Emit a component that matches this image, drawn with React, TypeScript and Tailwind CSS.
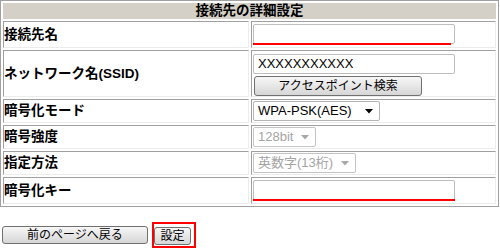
const font = "font-['Liberation_Sans','Noto_Sans_CJK_JP',sans-serif]";

const cell =
  "border border-t-[#a0a0a0] border-l-[#a0a0a0] border-b-[#ececec] border-r-[#ececec] align-middle";

function TextBox({ value, redWidth }: { value?: string; redWidth?: string }) {
  return (
    <div className="relative w-[202px] h-[21px]">
      <div className="w-[202px] h-[20px] border border-[#bdbdbd] rounded-[2px] bg-white pl-[4px] text-[13px] leading-[18px] text-black">
        {value}
      </div>
      {redWidth && (
        <span className={`absolute left-0 bottom-0 h-[2px] bg-[#ff0000] ${redWidth}`} />
      )}
    </div>
  );
}

function Select({ value, width, disabled }: { value: string; width: string; disabled?: boolean }) {
  return (
    <div
      className={`flex items-center justify-between h-[20px] border rounded-[2px] bg-white pl-[4px] pr-[6px] text-[13px] leading-[18px] ${width} ${
        disabled ? "border-[#c4c4c4] text-[#a3a3a3]" : "border-[#b5b5b5] text-black"
      }`}
    >
      <span>{value}</span>
      <svg width="8" height="5" viewBox="0 0 8 5">
        <path d="M0 0H8L4 4.5Z" fill={disabled ? "#a8a8a8" : "#000"} />
      </svg>
    </div>
  );
}

function Btn({ label, size }: { label: string; size: string }) {
  return (
    <button
      className={`block ${size} border border-[#707070] rounded-[3px] bg-gradient-to-b from-[#f7f7f7] to-[#d6d6d6] text-[12px] leading-[16px] text-black`}
    >
      {label}
    </button>
  );
}

const rows = [
  { label: "接続先名", h: "h-[27px]", content: <TextBox redWidth="w-[198px]" /> },
  {
    label: "ネットワーク名(SSID)",
    h: "h-[47px]",
    content: (
      <div className="flex flex-col gap-[2px] pt-[2px]">
        <div className="w-[202px] h-[20px] border border-[#bdbdbd] rounded-[2px] bg-white pl-[4px] text-[13px] leading-[18px] text-black">
          XXXXXXXXXXX
        </div>
        <div className="flex pl-[1px]">
          <Btn label="アクセスポイント検索" size="w-[168px] h-[20px]" />
        </div>
      </div>
    ),
  },
  { label: "暗号化モード", h: "h-[24px]", content: <Select value="WPA-PSK(AES)" width="w-[127px]" /> },
  { label: "暗号強度", h: "h-[24px]", content: <Select value="128bit" width="w-[63px]" disabled /> },
  { label: "指定方法", h: "h-[24px]", content: <Select value="英数字(13桁)" width="w-[103px]" disabled /> },
  { label: "暗号化キー", h: "h-[27px]", content: <TextBox redWidth="w-[202px]" /> },
];

export default function App() {
  return (
    <div className={`w-[500px] h-[248px] bg-white ${font}`}>
      <table className="w-[499px] border border-[#a0a0a0] border-separate border-spacing-[2px]">
        <tbody>
          <tr>
            <td
              colSpan={2}
              className="h-[16px] bg-[#d4d0c8] text-center text-[13.5px] font-bold leading-[16px] p-0 text-black"
            >
              接続先の詳細設定
            </td>
          </tr>
          {rows.map((row) => (
            <tr key={row.label}>
              <td className={`${cell} ${row.h} w-[246px] p-0 text-[13.5px] leading-[16px] font-bold text-black`}>
                {row.label}
              </td>
              <td className={`${cell} ${row.h} p-0 pl-[1px]`}>{row.content}</td>
            </tr>
          ))}
        </tbody>
      </table>

      <div className="flex items-center gap-[4px] mt-[15px] pl-[2px]">
        <Btn label="前のページへ戻る" size="w-[146px] h-[18px]" />
        <div className="flex items-start w-[44px] h-[26px] border-2 border-[#ff0000] pt-[3px]">
          <Btn label="設定" size="w-[37px] h-[18px]" />
        </div>
      </div>
    </div>
  );
}
